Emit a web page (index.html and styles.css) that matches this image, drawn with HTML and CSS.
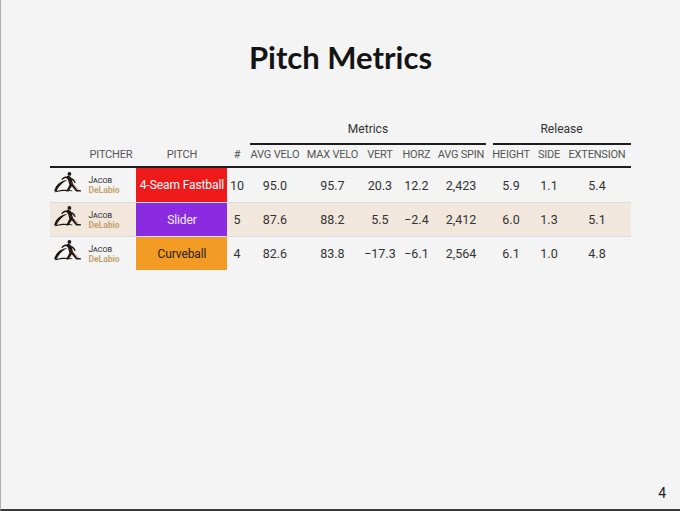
FILE: index.html
```html
<!DOCTYPE html>
<html lang="en">
<head>
<meta charset="utf-8">
<title>Pitch Metrics</title>
<link rel="stylesheet" href="styles.css">
</head>
<body>
<div class="slide">
  <h1 class="title">Pitch Metrics</h1>
  <table class="gt">
    <colgroup>
      <col class="c-logo"><col class="c-name"><col class="c-pitch"><col class="c-n">
      <col class="c-avg"><col class="c-max"><col class="c-vert"><col class="c-horz"><col class="c-spin">
      <col class="c-height"><col class="c-side"><col class="c-ext">
    </colgroup>
    <thead>
      <tr class="spanners">
        <th colspan="4"></th>
        <th colspan="5" class="sp sp-metrics"><div class="sp-label">Metrics</div></th>
        <th colspan="3" class="sp sp-release"><div class="sp-label">Release</div></th>
      </tr>
      <tr class="cols">
        <th></th><th>PITCHER</th><th>PITCH</th><th>#</th>
        <th>AVG VELO</th><th>MAX VELO</th><th>VERT</th><th>HORZ</th><th>AVG SPIN</th>
        <th>HEIGHT</th><th>SIDE</th><th>EXTENSION</th>
      </tr>
    </thead>
    <tbody>
      <tr>
        <td class="logo"><svg class="mark" viewBox="0 0 30 24" width="29" height="23"><path d="M1 21 C3 14 8 10 15 9.5 C11 11.5 6 15 3.5 21.5 Z" fill="#1d1612"/><path d="M2 21.5 C8 19 14 19.5 20 20.3 L20 21.1 C14 20.6 8 20.6 2 22.2 Z" fill="#1d1612"/><circle cx="17" cy="3" r="2" fill="#1d1612"/><path d="M15 5 C17 5 19 6 19.5 9 L21 14 L25 19.5 L29 20 L29 21.3 L24 21.3 L19.5 16 L16 21.5 L13.5 21.5 L17 14.5 L15.5 9 C14 7.5 13.5 6 15 5 Z" fill="#1d1612"/><path d="M15.5 6 C12 5 9.5 6.5 8.5 9 L9.8 9.4 C10.8 7.8 12.8 7.2 15.5 8 Z" fill="#1d1612"/><path d="M19 7 C21.5 8 23 10 23.5 12.5 L22.3 12.6 C21.8 10.8 20.5 9.5 18.8 9 Z" fill="#1d1612"/><path d="M16 10 C19 12 22 15 26 19" stroke="#8b3a2a" stroke-width="0.6" fill="none"/></svg></td>
        <td class="name"><span class="first">Jacob</span><span class="last">DeLabio</span></td>
        <td class="pitch fastball">4-Seam Fastball</td>
        <td>10</td><td>95.0</td><td>95.7</td><td>20.3</td><td>12.2</td><td>2,423</td><td>5.9</td><td>1.1</td><td>5.4</td>
      </tr>
      <tr class="alt">
        <td class="logo"><svg class="mark" viewBox="0 0 30 24" width="29" height="23"><path d="M1 21 C3 14 8 10 15 9.5 C11 11.5 6 15 3.5 21.5 Z" fill="#1d1612"/><path d="M2 21.5 C8 19 14 19.5 20 20.3 L20 21.1 C14 20.6 8 20.6 2 22.2 Z" fill="#1d1612"/><circle cx="17" cy="3" r="2" fill="#1d1612"/><path d="M15 5 C17 5 19 6 19.5 9 L21 14 L25 19.5 L29 20 L29 21.3 L24 21.3 L19.5 16 L16 21.5 L13.5 21.5 L17 14.5 L15.5 9 C14 7.5 13.5 6 15 5 Z" fill="#1d1612"/><path d="M15.5 6 C12 5 9.5 6.5 8.5 9 L9.8 9.4 C10.8 7.8 12.8 7.2 15.5 8 Z" fill="#1d1612"/><path d="M19 7 C21.5 8 23 10 23.5 12.5 L22.3 12.6 C21.8 10.8 20.5 9.5 18.8 9 Z" fill="#1d1612"/><path d="M16 10 C19 12 22 15 26 19" stroke="#8b3a2a" stroke-width="0.6" fill="none"/></svg></td>
        <td class="name"><span class="first">Jacob</span><span class="last">DeLabio</span></td>
        <td class="pitch slider">Slider</td>
        <td>5</td><td>87.6</td><td>88.2</td><td>5.5</td><td>−2.4</td><td>2,412</td><td>6.0</td><td>1.3</td><td>5.1</td>
      </tr>
      <tr>
        <td class="logo"><svg class="mark" viewBox="0 0 30 24" width="29" height="23"><path d="M1 21 C3 14 8 10 15 9.5 C11 11.5 6 15 3.5 21.5 Z" fill="#1d1612"/><path d="M2 21.5 C8 19 14 19.5 20 20.3 L20 21.1 C14 20.6 8 20.6 2 22.2 Z" fill="#1d1612"/><circle cx="17" cy="3" r="2" fill="#1d1612"/><path d="M15 5 C17 5 19 6 19.5 9 L21 14 L25 19.5 L29 20 L29 21.3 L24 21.3 L19.5 16 L16 21.5 L13.5 21.5 L17 14.5 L15.5 9 C14 7.5 13.5 6 15 5 Z" fill="#1d1612"/><path d="M15.5 6 C12 5 9.5 6.5 8.5 9 L9.8 9.4 C10.8 7.8 12.8 7.2 15.5 8 Z" fill="#1d1612"/><path d="M19 7 C21.5 8 23 10 23.5 12.5 L22.3 12.6 C21.8 10.8 20.5 9.5 18.8 9 Z" fill="#1d1612"/><path d="M16 10 C19 12 22 15 26 19" stroke="#8b3a2a" stroke-width="0.6" fill="none"/></svg></td>
        <td class="name"><span class="first">Jacob</span><span class="last">DeLabio</span></td>
        <td class="pitch curveball">Curveball</td>
        <td>4</td><td>82.6</td><td>83.8</td><td>−17.3</td><td>−6.1</td><td>2,564</td><td>6.1</td><td>1.0</td><td>4.8</td>
      </tr>
    </tbody>
  </table>
  <footer class="pagenum">4</footer>
</div>
</body>
</html>
```

FILE: styles.css
```css
* { box-sizing: border-box; }
html, body { margin: 0; padding: 0; background: #f4f4f4; }

.slide {
  width: 680px;
  height: 511px;
  display: flex;
  flex-direction: column;
  background: #f4f4f4;
  border-left: 1px solid #acacac;
  border-bottom: 2px solid #3a3a3a;
  font-family: Roboto, "Liberation Sans", sans-serif;
  color: #333;
}

.title {
  margin: 38px 0 0;
  font-family: Lato, "Liberation Sans", sans-serif;
  font-weight: 700;
  font-size: 31px;
  line-height: 38px;
  text-align: center;
  color: #141414;
}

.gt {
  width: 580px;
  margin: 45px auto 0;
  table-layout: fixed;
  border-collapse: separate;
  border-spacing: 0;
}

.c-logo { width: 35px; }
.c-name { width: 51px; }
.c-pitch { width: 91px; }
.c-n { width: 19px; }
.c-avg { width: 57px; }
.c-max { width: 58px; }
.c-vert { width: 37px; }
.c-horz { width: 36px; }
.c-spin { width: 53px; }
.c-height { width: 47px; }
.c-side { width: 29px; }
.c-ext { width: 67px; }

.spanners th { padding: 0; font-weight: 400; }
.sp-label {
  font-size: 12px;
  line-height: 16px;
  padding-bottom: 6px;
  border-bottom: 2px solid #1e1e1e;
  color: #333;
  text-align: center;
}
.sp-metrics .sp-label { margin: 0 2px 0 4px; }
.sp-release .sp-label { margin: 0 0 0 5px; }

.cols th {
  padding: 3px 0 4px;
  font-size: 11px;
  letter-spacing: -0.2px;
  line-height: 14px;
  font-weight: 400;
  color: #555;
  text-align: center;
  white-space: nowrap;
  border-bottom: 2px solid #1e1e1e;
}

tbody tr { height: 34px; }
tbody td {
  padding: 0;
  font-size: 12.5px;
  text-align: center;
  vertical-align: middle;
  white-space: nowrap;
  color: #333;
}
tbody tr + tr td { border-top: 1px solid #dcdcdc; }
tbody tr.alt td { background: #f1e7dd; }

td.logo { line-height: 0; }
.mark { display: inline-block; margin-top: -6px; }

td.name {
  text-align: left;
  padding-left: 3px;
  line-height: 10px;
}
.name .first {
  display: block;
  font-size: 8.5px;
  font-variant: small-caps;
  color: #333;
}
.name .last {
  display: block;
  font-size: 8.5px;
  font-weight: 700;
  color: #c6a46c;
}

td.pitch { font-size: 12px; letter-spacing: -0.1px; }
tbody tr td.fastball { background: #ee1a1a; color: #fff; }
tbody tr td.slider { background: #8a2be2; color: #f4ecff; }
tbody tr td.curveball { background: #f29b25; color: #2a1d0c; }

.pagenum {
  margin-top: auto;
  padding: 0 14px 6px 0;
  text-align: right;
  font-size: 14px;
  line-height: 20px;
  color: #222;
}
```
